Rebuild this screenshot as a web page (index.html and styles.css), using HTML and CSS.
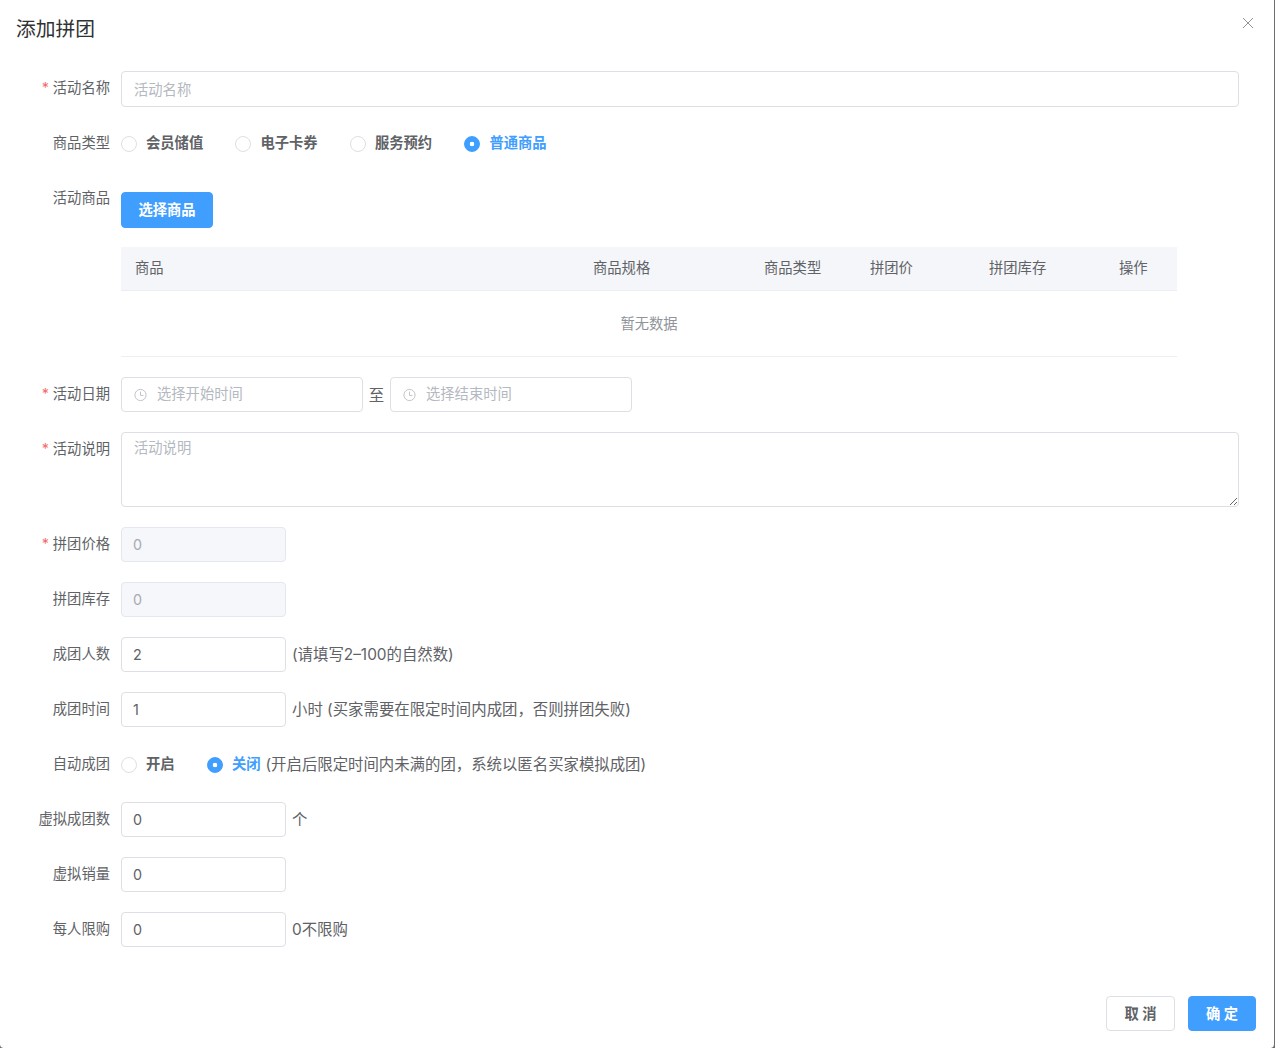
FILE: index.html
```html
<!DOCTYPE html>
<html lang="zh-CN">
<head>
    <meta charset="UTF-8">
    <meta name="viewport" content="width=device-width, initial-scale=1.0">
    <title>添加拼团</title>
    <link rel="stylesheet" href="styles.css">
</head>
<body>
    <div class="dialog">
        <header class="dialog-header">
            <span class="dialog-title">添加拼团</span>
            <button class="close-btn" aria-label="关闭">
                <svg width="12" height="12" viewBox="0 0 12 12"><path d="M1 1 L11 11 M11 1 L1 11" stroke="#909399" stroke-width="1" fill="none"/></svg>
            </button>
        </header>

        <form class="dialog-body">
            <div class="form-item">
                <label class="form-label required">活动名称</label>
                <div class="form-content">
                    <input class="input input-full" type="text" placeholder="活动名称">
                </div>
            </div>

            <div class="form-item">
                <label class="form-label">商品类型</label>
                <div class="form-content">
                    <span class="radio"><span class="radio-dot"></span><span class="radio-text">会员储值</span></span>
                    <span class="radio"><span class="radio-dot"></span><span class="radio-text">电子卡券</span></span>
                    <span class="radio"><span class="radio-dot"></span><span class="radio-text">服务预约</span></span>
                    <span class="radio checked"><span class="radio-dot"></span><span class="radio-text">普通商品</span></span>
                </div>
            </div>

            <div class="form-item form-item-table">
                <label class="form-label">活动商品</label>
                <div class="form-content form-stack">
                    <button type="button" class="btn btn-primary btn-pick">选择商品</button>
                    <div class="goods-table">
                        <div class="table-head">
                            <span class="col-goods">商品</span>
                            <span class="col-spec">商品规格</span>
                            <span class="col-type">商品类型</span>
                            <span class="col-price">拼团价</span>
                            <span class="col-stock">拼团库存</span>
                            <span class="col-action">操作</span>
                        </div>
                        <div class="table-empty">暂无数据</div>
                    </div>
                </div>
            </div>

            <div class="form-item">
                <label class="form-label required">活动日期</label>
                <div class="form-content">
                    <div class="date-input">
                        <svg class="clock" width="14" height="14" viewBox="0 0 14 14"><circle cx="6.5" cy="7" r="5.6" stroke="#c0c4cc" fill="none"/><path d="M6.5 3.6 V7.4 H9.5" stroke="#c0c4cc" fill="none"/></svg>
                        <input class="date-field" type="text" placeholder="选择开始时间">
                    </div>
                    <span class="date-sep">至</span>
                    <div class="date-input">
                        <svg class="clock" width="14" height="14" viewBox="0 0 14 14"><circle cx="6.5" cy="7" r="5.6" stroke="#c0c4cc" fill="none"/><path d="M6.5 3.6 V7.4 H9.5" stroke="#c0c4cc" fill="none"/></svg>
                        <input class="date-field" type="text" placeholder="选择结束时间">
                    </div>
                </div>
            </div>

            <div class="form-item form-item-area">
                <label class="form-label required">活动说明</label>
                <div class="form-content">
                    <textarea class="textarea" placeholder="活动说明"></textarea>
                </div>
            </div>

            <div class="form-item">
                <label class="form-label required">拼团价格</label>
                <div class="form-content">
                    <input class="input input-short" type="text" value="0" disabled>
                </div>
            </div>

            <div class="form-item">
                <label class="form-label">拼团库存</label>
                <div class="form-content">
                    <input class="input input-short" type="text" value="0" disabled>
                </div>
            </div>

            <div class="form-item">
                <label class="form-label">成团人数</label>
                <div class="form-content">
                    <input class="input input-short" type="text" value="2">
                    <span class="hint">(请填写2–100的自然数)</span>
                </div>
            </div>

            <div class="form-item">
                <label class="form-label">成团时间</label>
                <div class="form-content">
                    <input class="input input-short" type="text" value="1">
                    <span class="hint">小时 (买家需要在限定时间内成团，否则拼团失败)</span>
                </div>
            </div>

            <div class="form-item">
                <label class="form-label">自动成团</label>
                <div class="form-content">
                    <span class="radio"><span class="radio-dot"></span><span class="radio-text">开启</span></span>
                    <span class="radio radio-tight checked"><span class="radio-dot"></span><span class="radio-text">关闭</span></span>
                    <span class="hint hint-radio">(开启后限定时间内未满的团，系统以匿名买家模拟成团)</span>
                </div>
            </div>

            <div class="form-item">
                <label class="form-label">虚拟成团数</label>
                <div class="form-content">
                    <input class="input input-short" type="text" value="0">
                    <span class="hint">个</span>
                </div>
            </div>

            <div class="form-item">
                <label class="form-label">虚拟销量</label>
                <div class="form-content">
                    <input class="input input-short" type="text" value="0">
                </div>
            </div>

            <div class="form-item">
                <label class="form-label">每人限购</label>
                <div class="form-content">
                    <input class="input input-short" type="text" value="0">
                    <span class="hint">0不限购</span>
                </div>
            </div>
        </form>

        <footer class="dialog-footer">
            <button type="button" class="btn btn-default btn-cancel">取 消</button>
            <button type="button" class="btn btn-primary btn-ok">确 定</button>
        </footer>
    </div>
</body>
</html>
```

FILE: styles.css
```css
* {
    margin: 0;
    padding: 0;
    box-sizing: border-box;
}

html, body {
    height: 100%;
    overflow: hidden;
}

body {
    background: #6e6e6e;
    color: #606266;
    font-family: "Inter", "Noto Sans CJK SC", sans-serif;
    font-size: 14.3px;
}

input, textarea, button {
    font-family: inherit;
}

.dialog {
    width: 1274px;
    height: 1048px;
    background: #fff;
    border-radius: 0 0 4px 4px;
    position: relative;
}

.dialog-header {
    height: 59px;
    padding: 15px 16px 0;
}

.dialog-title {
    font-size: 19.8px;
    line-height: 29px;
    color: #303133;
}

.close-btn {
    position: absolute;
    top: 17px;
    right: 20px;
    width: 12px;
    height: 12px;
    border: none;
    background: none;
    display: flex;
}

.dialog-body {
    padding: 12px 35px 0 0;
}

.form-item {
    display: flex;
    min-height: 35px;
    margin-bottom: 20px;
}

.form-item:first-child {
    margin-bottom: 19px;
}

.form-label {
    width: 121px;
    flex-shrink: 0;
    padding-right: 11px;
    line-height: 34px;
    text-align: right;
    color: #606266;
}

.form-label.required::before {
    content: "*";
    color: #f56c6c;
    margin-right: 4px;
}

.form-content {
    flex: 1;
    display: flex;
    align-items: center;
    min-height: 35px;
}

.form-stack {
    flex-direction: column;
    align-items: flex-start;
}

.input {
    height: 35px;
    padding: 0 12px;
    border: 1px solid #dcdfe6;
    border-radius: 4px;
    background: #fff;
    color: #606266;
    font-size: 14.3px;
    outline: none;
}

.input-full {
    width: 100%;
    height: 36px;
}

.input-short {
    width: 165px;
    padding-left: 11px;
}

.input:disabled {
    background: #f5f7fa;
    border-color: #e4e7ed;
    color: #a8abb2;
}

::placeholder {
    color: #b4b8c0;
    opacity: 1;
}

.radio {
    display: inline-flex;
    align-items: center;
    margin-right: 32.3px;
    font-weight: 700;
    color: #606266;
}

.radio-tight {
    margin-right: 0;
}

.radio-text {
    margin-bottom: 4px;
}

.radio-dot {
    width: 16px;
    height: 16px;
    border: 1px solid #dcdfe6;
    border-radius: 50%;
    margin-right: 9px;
    background: #fff;
}

.radio.checked {
    color: #409eff;
}

.radio.checked .radio-dot {
    border-color: #409eff;
    background: radial-gradient(circle, #fff 0, #fff 2px, #409eff 2.6px);
}

.btn {
    height: 36px;
    border-radius: 4px;
    padding-bottom: 3px;
    font-size: 14.3px;
    font-weight: 700;
    border: 1px solid #dcdfe6;
    background: #fff;
    color: #606266;
}

.btn-primary {
    background: #409eff;
    border-color: #409eff;
    color: #fff;
}

.btn-pick {
    width: 92px;
    margin: 11px 0 19px;
}

.goods-table {
    width: 1056px;
    color: #606266;
}

.table-head {
    display: flex;
    align-items: center;
    height: 44px;
    padding-bottom: 4px;
    background: #f5f6fa;
    border-bottom: 1px solid #ebeef5;
}

.col-goods { width: 472px; padding-left: 14px; }
.col-spec { width: 171px; }
.col-type { width: 106px; }
.col-price { width: 119px; }
.col-stock { width: 130px; }
.col-action { width: 58px; }

.table-empty {
    height: 66px;
    line-height: 66px;
    text-align: center;
    color: #909399;
    border-bottom: 1px solid #ebeef5;
}

.date-input {
    width: 242px;
    height: 35px;
    display: flex;
    align-items: center;
    padding-left: 12px;
    border: 1px solid #dcdfe6;
    border-radius: 4px;
}

.clock {
    flex-shrink: 0;
    margin-right: 9px;
}

.date-field {
    border: none;
    outline: none;
    width: 190px;
    padding-bottom: 2px;
    font-size: 14.3px;
    background: transparent;
}

.date-sep {
    width: 27px;
    margin-bottom: 2px;
    text-align: center;
    font-size: 15.4px;
}

.textarea {
    display: block;
    width: 100%;
    height: 75px;
    padding: 4px 12px;
    border: 1px solid #dcdfe6;
    border-radius: 4px;
    color: #606266;
    font-size: 14.3px;
    line-height: 21px;
    outline: none;
    resize: vertical;
}

.hint {
    margin: 0 0 3px 6px;
    color: #606266;
    font-size: 15.4px;
}

.hint-radio {
    margin-left: 5px;
}

.dialog-footer {
    position: absolute;
    right: 18px;
    bottom: 17px;
    display: flex;
    gap: 13px;
}

.dialog-footer .btn {
    height: 35px;
}

.btn-cancel {
    width: 69px;
}

.btn-ok {
    width: 68px;
}
```
